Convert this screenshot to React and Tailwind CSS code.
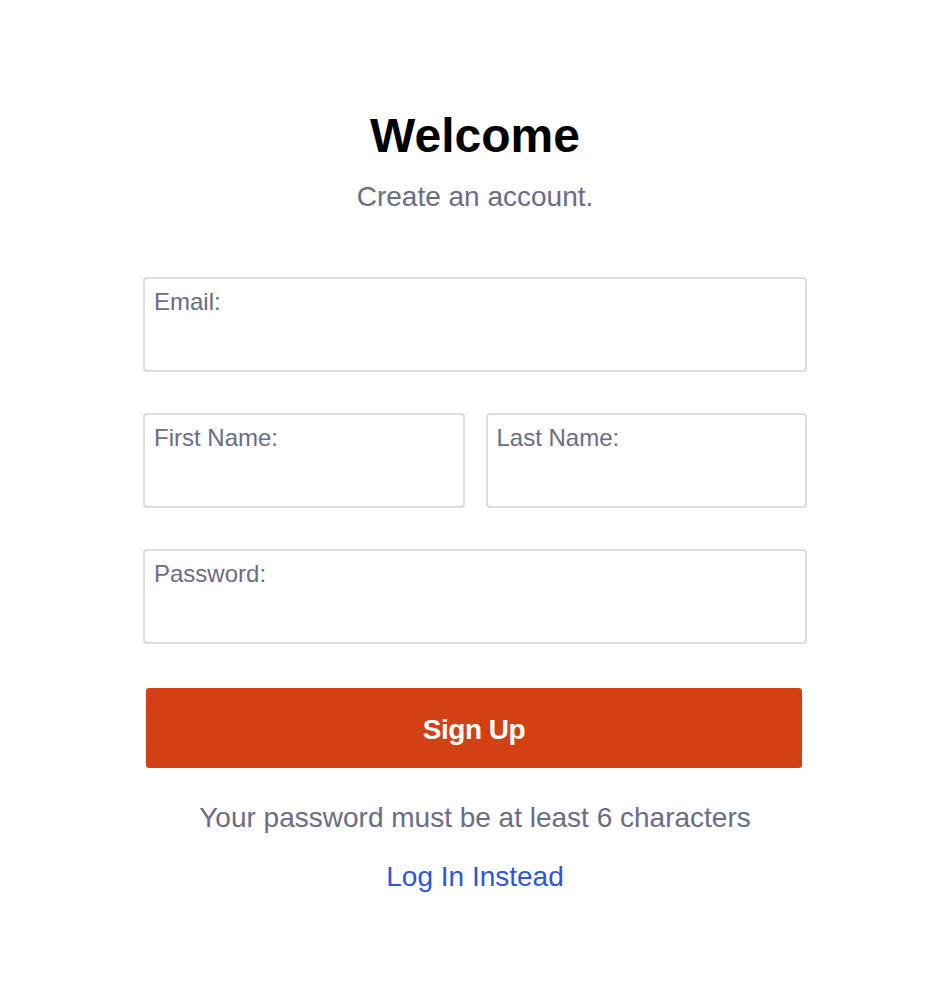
import React, { useState } from 'react';

const Field = ({ label, type = 'text', name, value, onChange }) => (
    <label className="flex h-[95px] flex-col rounded-[4px] border-2 border-[#dcdce2] bg-white pl-[9px] pr-3 pt-[11px]">
        <span className="text-[24px] leading-none text-[#6c6c84]">{label}</span>
        <input
            name={name}
            type={type}
            value={value}
            onChange={onChange}
            className="mt-2 w-full bg-transparent text-[24px] leading-none text-gray-900 outline-none"
        />
    </label>
);

const App = () => {
    const [form, setForm] = useState({ email: '', firstName: '', lastName: '', password: '' });

    const handleChange = (e) => {
        const { name, value } = e.target;
        setForm({ ...form, [name]: value });
    };

    return (
        <div className="min-h-screen bg-white font-['Liberation_Sans',Arial,sans-serif]">
            <div className="mx-auto w-[664px] pt-[112px] pb-20 text-center">
                <h1 className="text-5xl font-bold leading-none text-black">Welcome</h1>
                <p className="mt-[23px] text-[28px] leading-none text-[#6c6c84]">Create an account.</p>

                <form className="mt-[66px] text-left" onSubmit={(e) => e.preventDefault()}>
                    <Field label="Email:" name="email" type="email" value={form.email} onChange={handleChange} />

                    <div className="mt-[41px] grid grid-cols-2 gap-[21px]">
                        <Field label="First Name:" name="firstName" value={form.firstName} onChange={handleChange} />
                        <Field label="Last Name:" name="lastName" value={form.lastName} onChange={handleChange} />
                    </div>

                    <div className="mt-[41px]">
                        <Field label="Password:" name="password" type="password" value={form.password} onChange={handleChange} />
                    </div>

                    <button
                        type="submit"
                        className="mx-[3px] mt-[44px] flex h-[80px] w-[656px] items-center justify-center rounded-[3px] bg-[#d14114] pt-[4px] text-[28px] font-bold tracking-[-0.5px] text-white"
                    >
                        Sign Up
                    </button>
                </form>

                <p className="mt-[36px] text-[28px] leading-none text-[#6c6c84]">Your password must be at least 6 characters</p>
                <a href="#" className="mt-[31px] inline-block text-[28px] leading-none text-[#2f56d9]">Log In Instead</a>
            </div>
        </div>
    );
};

export default App;
